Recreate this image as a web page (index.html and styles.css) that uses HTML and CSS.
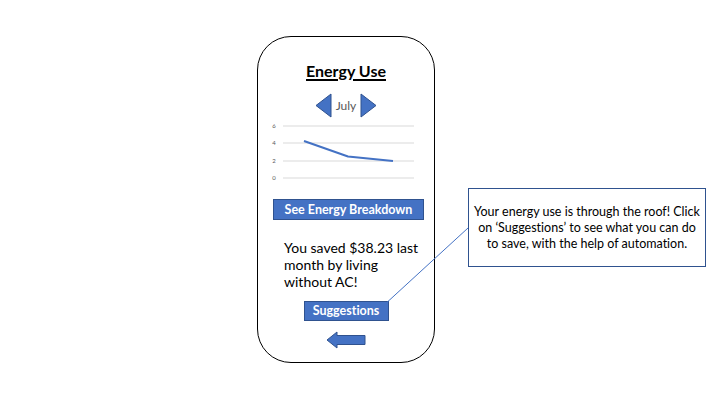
FILE: index.html
```html
<!DOCTYPE html>
<html lang="en">
<head>
    <meta charset="UTF-8">
    <title>Energy Use</title>
    <link rel="stylesheet" href="styles.css">
</head>
<body>
    <div class="slide">
        <div class="phone">
            <h1 class="title">Energy Use</h1>

            <div class="month-nav">
                <svg class="nav-arrow" width="17" height="25" viewBox="0 0 17 25">
                    <polygon points="16,1 16,24 1,12.5" />
                </svg>
                <span class="month">July</span>
                <svg class="nav-arrow" width="17" height="25" viewBox="0 0 17 25">
                    <polygon points="1,1 1,24 16,12.5" />
                </svg>
            </div>

            <svg class="chart" width="160" height="62" viewBox="0 0 160 62">
                <g class="grid">
                    <line x1="17" y1="6" x2="148" y2="6" />
                    <line x1="17" y1="23" x2="148" y2="23" />
                    <line x1="17" y1="41" x2="148" y2="41" />
                    <line x1="17" y1="58" x2="148" y2="58" />
                </g>
                <g class="axis">
                    <text x="8" y="8">6</text>
                    <text x="8" y="25">4</text>
                    <text x="8" y="43">2</text>
                    <text x="8" y="60">0</text>
                </g>
                <polyline class="series" points="38,21 82,36.5 127,41" />
            </svg>

            <div class="btn btn-wide">See Energy Breakdown</div>

            <p class="savings">You saved $38.23 last month by living without AC!</p>

            <div class="btn btn-small">Suggestions</div>

            <svg class="back" width="40" height="18" viewBox="0 0 40 18">
                <polygon points="1,9 11,1 11,4.5 39,4.5 39,13.5 11,13.5 11,17" />
            </svg>
        </div>

        <!-- callout note over the slide -->
        <svg class="connector" width="720" height="405" viewBox="0 0 720 405">
            <line x1="468" y1="228" x2="383" y2="306" />
        </svg>
        <div class="note">
            Your energy use is through the roof! Click on ‘Suggestions’ to see what you can do to save, with the help of automation.
        </div>
    </div>
</body>
</html>
```

FILE: styles.css
```css
:root {
    --blue: #4472c4;
    --blue-dark: #2f528f;
    --grid: #d9d9d9;
    --muted: #595959;
}

body {
    margin: 0;
    background-color: #ffffff;
    font-family: 'Lato', 'Liberation Sans', sans-serif;
    font-variant-ligatures: none;
    color: #000000;
}

.slide {
    position: relative;
    width: 720px;
    height: 405px;
    overflow: hidden;
}

.phone {
    box-sizing: border-box;
    width: 178px;
    height: 327px;
    margin: 36px 0 0 257px;
    padding-top: 24px;
    border: 1.5px solid #000000;
    border-radius: 34px;
    display: flex;
    flex-direction: column;
    align-items: center;
}

.title {
    margin: 0;
    font-size: 16px;
    line-height: 20px;
    font-weight: 700;
    text-decoration: underline;
    text-decoration-thickness: 1.5px;
    text-underline-offset: 2px;
}

.month-nav {
    display: flex;
    align-items: center;
    gap: 4px;
    margin-top: 12px;
}

.nav-arrow polygon {
    fill: var(--blue);
    stroke: var(--blue-dark);
    stroke-width: 1;
}

.month {
    font-size: 12px;
    color: var(--muted);
}

.chart {
    display: block;
    margin-top: 2px;
}

.grid line {
    stroke: var(--grid);
    stroke-width: 1;
}

.axis text {
    font-size: 6px;
    fill: var(--muted);
    text-anchor: middle;
}

.series {
    fill: none;
    stroke: var(--blue);
    stroke-width: 2;
    stroke-linejoin: round;
}

.btn {
    box-sizing: border-box;
    background-color: var(--blue);
    border: 1px solid var(--blue-dark);
    color: #ffffff;
    text-align: center;
    font-weight: 700;
}

.btn-wide {
    width: 151px;
    height: 21px;
    margin: 17px 0 0 5px;
    font-size: 12.5px;
    line-height: 19px;
}

.savings {
    align-self: flex-start;
    width: 140px;
    margin: 19px 0 0 26px;
    font-size: 14px;
    line-height: 17px;
}

.btn-small {
    width: 85px;
    height: 20px;
    margin-top: 11px;
    font-size: 12.5px;
    line-height: 18px;
}

.back {
    display: block;
    margin-top: 10px;
}

.back polygon {
    fill: var(--blue);
    stroke: var(--blue-dark);
    stroke-width: 1;
}

.connector {
    position: absolute;
    left: 0;
    top: 0;
    pointer-events: none;
}

.connector line {
    stroke: var(--blue);
    stroke-width: 1;
}

.note {
    position: absolute;
    left: 468px;
    top: 188px;
    box-sizing: border-box;
    width: 238px;
    height: 79px;
    padding: 0 4px;
    border: 1px solid var(--blue-dark);
    background-color: #ffffff;
    display: flex;
    align-items: center;
    justify-content: center;
    text-align: center;
    font-size: 12.5px;
    line-height: 16px;
}
```
